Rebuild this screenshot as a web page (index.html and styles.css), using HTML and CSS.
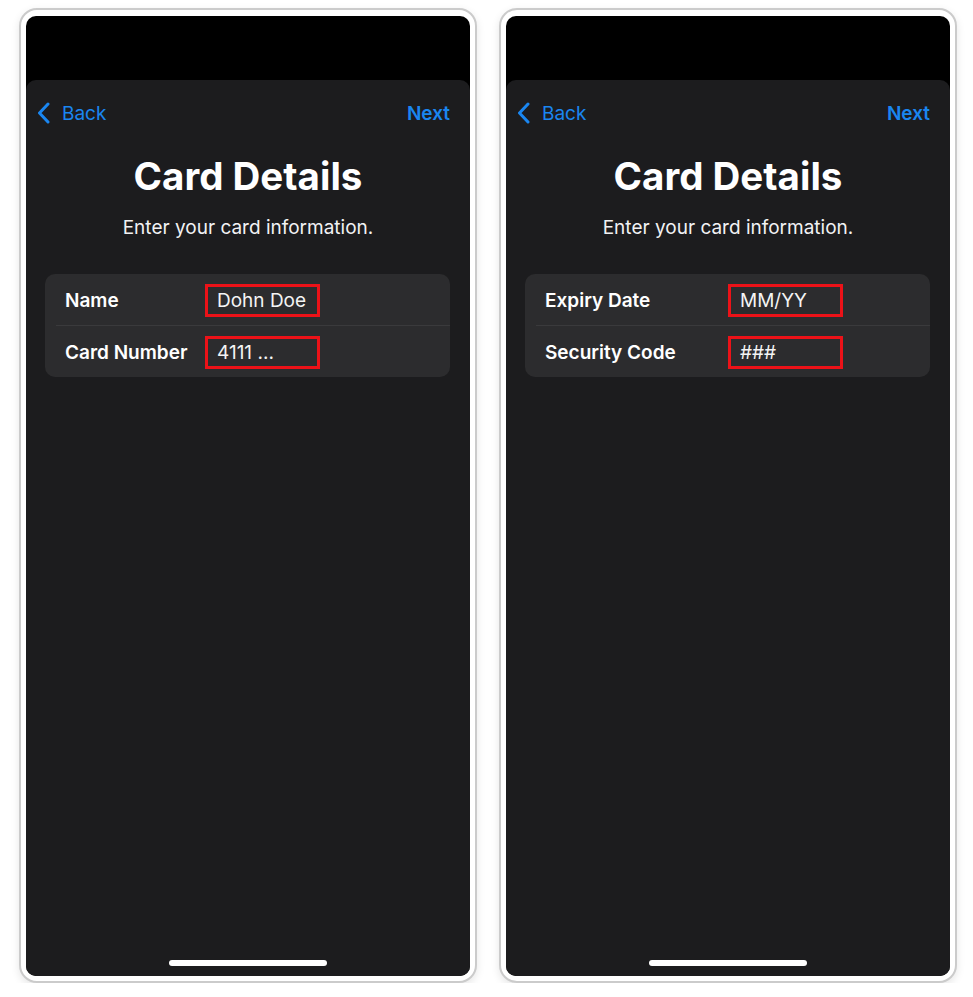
FILE: index.html
```html
<!DOCTYPE html>
<html lang="en">
<head>
<meta charset="utf-8">
<title>Card Details</title>
<link rel="stylesheet" href="styles.css">
</head>
<body>
<div class="stage">
  <div class="phone">
    <div class="screen">
      <div class="status"></div>
      <div class="sheet">
        <div class="nav">
          <a class="back">
            <svg class="chev" width="13" height="22" viewBox="0 0 13 22"><path d="M11 2 L2.5 11 L11 20" fill="none" stroke="currentColor" stroke-width="3" stroke-linecap="round" stroke-linejoin="round"/></svg>
            <span>Back</span>
          </a>
          <a class="next">Next</a>
        </div>
        <h1 class="title">Card Details</h1>
        <p class="subtitle">Enter your card information.</p>
        <div class="group group-a">
          <div class="row">
            <span class="label">Name</span>
            <span class="value">Dohn Doe</span>
          </div>
          <div class="sep"></div>
          <div class="row">
            <span class="label">Card Number</span>
            <span class="value">4111 ...</span>
          </div>
        </div>
        <div class="home"></div>
      </div>
    </div>
  </div>
  <div class="phone">
    <div class="screen">
      <div class="status"></div>
      <div class="sheet">
        <div class="nav">
          <a class="back">
            <svg class="chev" width="13" height="22" viewBox="0 0 13 22"><path d="M11 2 L2.5 11 L11 20" fill="none" stroke="currentColor" stroke-width="3" stroke-linecap="round" stroke-linejoin="round"/></svg>
            <span>Back</span>
          </a>
          <a class="next">Next</a>
        </div>
        <h1 class="title">Card Details</h1>
        <p class="subtitle">Enter your card information.</p>
        <div class="group group-b">
          <div class="row">
            <span class="label">Expiry Date</span>
            <span class="value">MM/YY</span>
          </div>
          <div class="sep"></div>
          <div class="row">
            <span class="label">Security Code</span>
            <span class="value">###</span>
          </div>
        </div>
        <div class="home"></div>
      </div>
    </div>
  </div>
</div>
</body>
</html>
```
FILE: styles.css
```css
* { box-sizing: border-box; }
html, body { margin: 0; padding: 0; background: #ffffff; }
body { font-family: Inter, "Noto Sans", "Liberation Sans", sans-serif; }

.stage {
  display: flex;
  gap: 22px;
  padding: 8px 0 0 19px;
}

.phone {
  width: 458px;
  height: 975px;
  border: 2px solid #cbcbcb;
  border-radius: 18px;
  padding: 6px 5px 5px 5px;
  background: #ffffff;
  box-shadow: 0 3px 8px rgba(0, 0, 0, 0.10);
}

.screen {
  height: 100%;
  background: #000000;
  border-radius: 10px;
  overflow: hidden;
  display: flex;
  flex-direction: column;
}

.status { height: 64px; flex: none; }

.sheet {
  flex: 1;
  background: #1c1c1e;
  border-radius: 10px 10px 0 0;
  display: flex;
  flex-direction: column;
  color: #ffffff;
}

.nav {
  height: 66px;
  display: flex;
  align-items: center;
  justify-content: space-between;
  padding: 0 20px 0 11px;
  color: #1a86f0;
  font-size: 19px;
  line-height: 23px;
}
.back { display: flex; align-items: center; gap: 12px; }
.chev { display: block; }
.next { font-weight: 600; }

.title {
  margin: 8px 0 0;
  text-align: center;
  font-size: 38.5px;
  line-height: 44px;
  font-weight: 700;
  letter-spacing: 0;
}

.subtitle {
  margin: 19px 0 0;
  text-align: center;
  font-size: 19px;
  line-height: 22px;
  color: #f2f2f4;
}

.group {
  margin: 35px 20px 0 19px;
  background: #2c2c2e;
  border-radius: 10px;
}
.group-a { --label-col: 140px; }
.group-b { --label-col: 183px; }

.row {
  height: 51px;
  display: flex;
  align-items: center;
  padding: 2px 0 0 20px;
}
.label {
  width: var(--label-col);
  flex: none;
  font-size: 19px;
  line-height: 22px;
  font-weight: 600;
  white-space: nowrap;
}
.value {
  width: 115px;
  height: 33px;
  border: 3px solid #ec1218;
  padding: 0 0 0 9px;
  display: flex;
  align-items: center;
  font-size: 19px;
  line-height: 22px;
  color: #f4f4f4;
}

.sep {
  height: 1px;
  margin-left: 11px;
  background: #3a3a3c;
}

.home {
  margin: auto auto 10px;
  width: 158px;
  height: 6px;
  border-radius: 3px;
  background: #ffffff;
}
```
